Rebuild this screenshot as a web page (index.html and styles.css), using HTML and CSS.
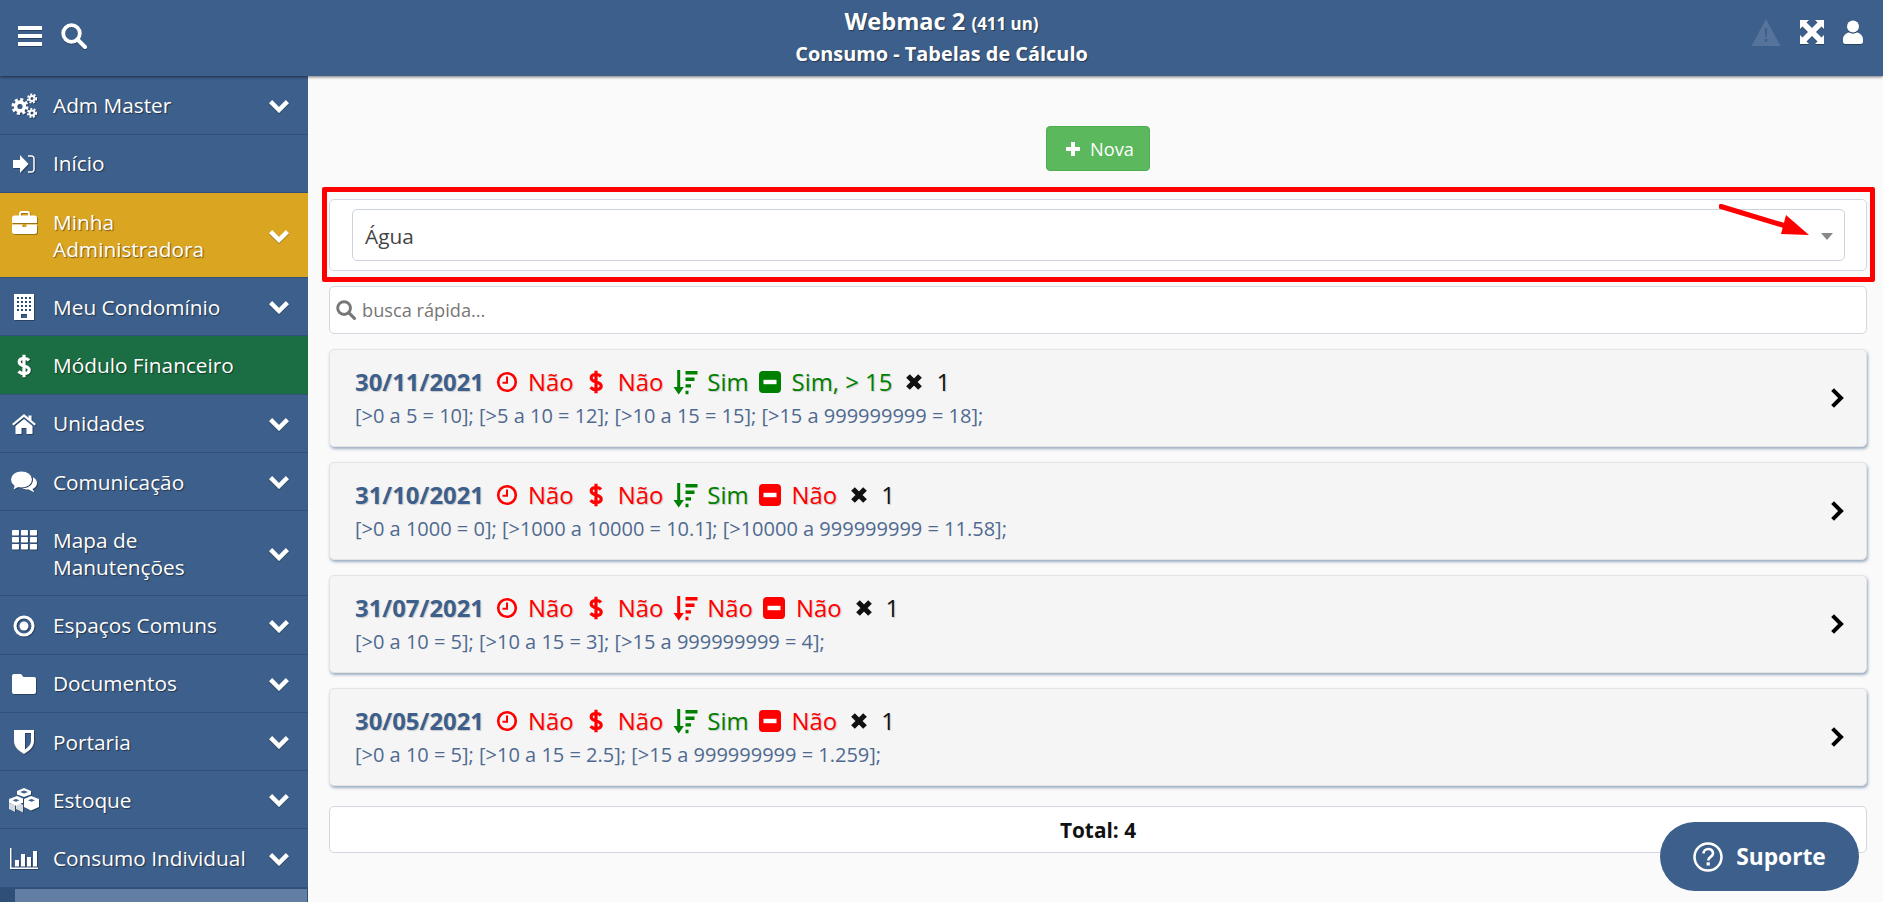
FILE: index.html
```html
<!DOCTYPE html>
<html lang="pt-BR">
<head>
<meta charset="utf-8">
<title>Consumo - Tabelas de Cálculo</title>
<link rel="stylesheet" href="styles.css">
</head>
<body>
<svg class="defs" width="0" height="0" aria-hidden="true">
  <defs>
    <symbol id="i-chev-d" viewBox="0 0 22 14"><path d="M2.6 2.6 11 11l8.4-8.4" fill="none" stroke="currentColor" stroke-width="4.4"/></symbol>
    <symbol id="i-chev-r" viewBox="0 0 14 22"><path d="M2.6 2.6 11 11l-8.4 8.4" fill="none" stroke="currentColor" stroke-width="4"/></symbol>
    <symbol id="i-clock" viewBox="0 0 22 22"><circle cx="11" cy="11" r="8.8" fill="none" stroke="currentColor" stroke-width="2.6"/><path d="M11 5.5v6.2H6.5" fill="none" stroke="currentColor" stroke-width="2"/></symbol>
    <symbol id="i-dollar" viewBox="0 0 14 24"><path d="M12 6.4C10.8 5 9 4.5 7 4.5 4.2 4.500 2.200 5.800 2.200 8c0 5 10 2.900 10 8 0 2.300-2.200 3.500-5 3.500-2.300 0-4.300-.7-5.700-2.200M7 .8v22.400" fill="none" stroke="currentColor" stroke-width="3.200"/></symbol>
    <symbol id="i-sort" viewBox="0 0 25 25"><path d="M4.200 0h3v17h3.700L5.700 24.500.5 17h3.700z" fill="currentColor"/><path d="M12.500 1h12v3.400h-12zM12.500 7.600h9v3.400h-9zM12.500 14.200h5.500v3.400h-5.500zM12.500 20.800h3v3.400h-3z" fill="currentColor"/></symbol>
    <symbol id="i-minus" viewBox="0 0 22 22"><rect width="22" height="22" rx="4" fill="currentColor"/><rect x="4.500" y="8.800" width="13" height="4.400" fill="#fff"/></symbol>
    <symbol id="i-x" viewBox="0 0 18 18"><path d="M3 3l12 12M15 3 3 15" fill="none" stroke="currentColor" stroke-width="5.200"/></symbol>
    <symbol id="i-gears" viewBox="0 0 28 26"><g fill="none" stroke="currentColor"><circle cx="10" cy="13.500" r="4.400" stroke-width="3.600"/><circle cx="10" cy="13.500" r="7" stroke-width="3" stroke-dasharray="3 2.500"/><circle cx="22" cy="5.500" r="2.500" stroke-width="2"/><circle cx="22" cy="5.500" r="4.200" stroke-width="1.800" stroke-dasharray="2 1.500"/><circle cx="22" cy="20" r="2.500" stroke-width="2"/><circle cx="22" cy="20" r="4.200" stroke-width="1.800" stroke-dasharray="2 1.500"/></g></symbol>
    <symbol id="i-login" viewBox="0 0 22 18"><path d="M0 5h7V0l8.500 9L7 18v-5H0z" fill="currentColor"/><path d="M15 1h3.500A2.500 2.500 0 0 1 21 3.500v11a2.500 2.500 0 0 1-2.500 2.500H15" fill="none" stroke="currentColor" stroke-width="1.500"/></symbol>
    <symbol id="i-case" viewBox="0 0 25 23"><path d="M8 5V2.500A1.500 1.500 0 0 1 9.500 1h6A1.500 1.500 0 0 1 17 2.500V5" fill="none" stroke="currentColor" stroke-width="1.800"/><path d="M2.500 4.500h20A2.500 2.500 0 0 1 25 7v5H0V7a2.500 2.500 0 0 1 2.500-2.500zM0 13.500h10.500V16h4v-2.500H25v7a2.500 2.500 0 0 1-2.500 2.500h-20A2.500 2.500 0 0 1 0 20.500z" fill="currentColor"/></symbol>
    <symbol id="i-building" viewBox="0 0 20 26"><path fill-rule="evenodd" fill="currentColor" d="M0 0h20v26H0zM3 3v2h2V3zM7 3v2h2V3zM11 3v2h2V3zM15 3v2h2V3zM3 7v2h2V7zM7 7v2h2V7zM11 7v2h2V7zM15 7v2h2V7zM3 11v2h2v-2zM7 11v2h2v-2zM11 11v2h2v-2zM15 11v2h2v-2zM3 15v2h2v-2zM7 15v2h2v-2zM11 15v2h2v-2zM15 15v2h2v-2zM7 20v4h6v-4z"/></symbol>
    <symbol id="i-home" viewBox="0 0 24 20"><path d="M12 0 16.500 3.800V1.500h3v4.800L24 10l-1.500 1.500L12 3 1.500 11.500 0 10zM12 5l8.500 7v8h-6v-6h-5v6h-6v-8z" fill="currentColor"/></symbol>
    <symbol id="i-chat" viewBox="0 0 26 22"><ellipse cx="10.500" cy="8.500" rx="10.500" ry="8" fill="currentColor"/><path d="M4 14l-1.500 4.500L9 15z" fill="currentColor"/><path d="M22.500 6.500C25 8 26 10 26 12c0 2.700-2 5-4.500 6l2 3.500-6-3c-2.500.2-5-.5-6.500-1.500 6 .5 12-3 11-10.500z" fill="currentColor"/></symbol>
    <symbol id="i-th" viewBox="0 0 25 20"><g fill="currentColor"><rect width="7" height="5.500" rx=".8"/><rect x="9" width="7" height="5.500" rx=".8"/><rect x="18" width="7" height="5.500" rx=".8"/><rect y="7" width="7" height="5.500" rx=".8"/><rect x="9" y="7" width="7" height="5.500" rx=".8"/><rect x="18" y="7" width="7" height="5.500" rx=".8"/><rect y="14" width="7" height="5.500" rx=".8"/><rect x="9" y="14" width="7" height="5.500" rx=".8"/><rect x="18" y="14" width="7" height="5.500" rx=".8"/></g></symbol>
    <symbol id="i-record" viewBox="0 0 22 22"><circle cx="11" cy="11" r="9" fill="none" stroke="currentColor" stroke-width="3"/><circle cx="11" cy="11" r="4.500" fill="currentColor"/></symbol>
    <symbol id="i-folder" viewBox="0 0 24 20"><path d="M2 0h7l2.500 3H22a2 2 0 0 1 2 2v13a2 2 0 0 1-2 2H2a2 2 0 0 1-2-2V2a2 2 0 0 1 2-2z" fill="currentColor"/></symbol>
    <symbol id="i-shield" viewBox="0 0 20 24"><path fill-rule="evenodd" d="M0 0h20v11c0 6-5 10-10 13C5 21 0 17 0 11zM11 3v16.500c3-2 6-5 6-8.500V3z" fill="currentColor"/></symbol>
    <symbol id="i-cubes" viewBox="0 0 30 25"><g fill="currentColor"><path d="M15 0l7 3v3.500L15 9 8 6.500V3z"/><path d="M8 8l6 2.500v4.300l-7 3-7-3V11z"/><path d="M22 8l8 3v8l-8 3.500L15 19v-8z"/><path d="M7 13v8l7 3.500V17zM0 15v6l6 3v-7z" opacity=".8"/></g><path d="M15 2.500 19 4l-4 1.500L11 4zM7 11l3.500 1.300L7 13.800 3.500 12.300zM22.500 11l3.500 1.300-3.500 1.500L19 12.300z" fill="#3d5f8b"/></symbol>
    <symbol id="i-chart" viewBox="0 0 28 22"><path d="M0 0h1.500v19.500H28V21H0z" fill="currentColor"/><path d="M5 12h4v6.500H5zM11 6h4v12.500h-4zM17 9h4v9.500h-4zM23 3h4v15.500h-4z" fill="currentColor"/></symbol>
    <symbol id="i-warning" viewBox="0 0 30 28"><path d="M15 1 29.500 28H.5z" fill="currentColor"/><path d="M13.800 10h2.400l-.4 9h-1.600zM13.700 21h2.600v2.600h-2.600z" fill="#3d5f8b"/></symbol>
    <symbol id="i-full" viewBox="0 0 24 24"><path d="M0 0h9L6.500 2.500 12 8l5.500-5.500L15 0h9v9l-2.500-2.500L16 12l5.500 5.500L24 15v9h-9l2.500-2.500L12 16l-5.500 5.500L9 24H0v-9l2.500 2.500L8 12 2.500 6.500 0 9z" fill="currentColor"/></symbol>
    <symbol id="i-user" viewBox="0 0 20 24"><circle cx="10" cy="6.500" r="6" fill="currentColor"/><path d="M6 12.500c2.500 1.500 5.500 1.500 8 0 3 .5 6 3 6 7v2A2.500 2.500 0 0 1 17.500 24h-15A2.500 2.500 0 0 1 0 21.500v-2c0-4 3-6.500 6-7z" fill="currentColor"/></symbol>
    <symbol id="i-search" viewBox="0 0 26 26"><circle cx="10.500" cy="10.500" r="8.300" fill="none" stroke="currentColor" stroke-width="3.800"/><path d="M16.500 16.500l7.500 7.500" fill="none" stroke="currentColor" stroke-width="4" stroke-linecap="round"/></symbol>
  </defs>
</svg>

<header class="topbar">
  <div class="topbar-left">
    <svg class="icon-bars" viewBox="0 0 24 20"><path d="M0 0h24v4H0zM0 8h24v4H0zM0 16h24v4H0z" fill="currentColor"/></svg>
    <svg class="icon-search"><use href="#i-search"/></svg>
  </div>
  <div class="topbar-title">
    <div class="title-main">Webmac 2 <small class="title-count">(411 un)</small></div>
    <div class="title-sub">Consumo - Tabelas de Cálculo</div>
  </div>
  <div class="topbar-right">
    <svg class="icon-warning"><use href="#i-warning"/></svg>
    <svg class="icon-full"><use href="#i-full"/></svg>
    <svg class="icon-user"><use href="#i-user"/></svg>
  </div>
</header>

<div class="layout">
  <nav class="sidebar">
    <a class="nav-item"><span class="nav-icon"><svg class="ni-gears"><use href="#i-gears"/></svg></span><span class="nav-label">Adm Master</span><svg class="nav-chev"><use href="#i-chev-d"/></svg></a>
    <a class="nav-item"><span class="nav-icon"><svg class="ni-login"><use href="#i-login"/></svg></span><span class="nav-label">Início</span></a>
    <a class="nav-item nav-gold"><span class="nav-icon nav-icon-top"><svg class="ni-case"><use href="#i-case"/></svg></span><span class="nav-label">Minha Administradora</span><svg class="nav-chev"><use href="#i-chev-d"/></svg></a>
    <a class="nav-item"><span class="nav-icon"><svg class="ni-building"><use href="#i-building"/></svg></span><span class="nav-label">Meu Condomínio</span><svg class="nav-chev"><use href="#i-chev-d"/></svg></a>
    <a class="nav-item nav-green"><span class="nav-icon"><svg class="ni-dollar"><use href="#i-dollar"/></svg></span><span class="nav-label">Módulo Financeiro</span></a>
    <a class="nav-item"><span class="nav-icon"><svg class="ni-home"><use href="#i-home"/></svg></span><span class="nav-label">Unidades</span><svg class="nav-chev"><use href="#i-chev-d"/></svg></a>
    <a class="nav-item"><span class="nav-icon"><svg class="ni-chat"><use href="#i-chat"/></svg></span><span class="nav-label">Comunicação</span><svg class="nav-chev"><use href="#i-chev-d"/></svg></a>
    <a class="nav-item"><span class="nav-icon nav-icon-top"><svg class="ni-th"><use href="#i-th"/></svg></span><span class="nav-label">Mapa de Manutenções</span><svg class="nav-chev"><use href="#i-chev-d"/></svg></a>
    <a class="nav-item"><span class="nav-icon"><svg class="ni-record"><use href="#i-record"/></svg></span><span class="nav-label">Espaços Comuns</span><svg class="nav-chev"><use href="#i-chev-d"/></svg></a>
    <a class="nav-item"><span class="nav-icon"><svg class="ni-folder"><use href="#i-folder"/></svg></span><span class="nav-label">Documentos</span><svg class="nav-chev"><use href="#i-chev-d"/></svg></a>
    <a class="nav-item"><span class="nav-icon"><svg class="ni-shield"><use href="#i-shield"/></svg></span><span class="nav-label">Portaria</span><svg class="nav-chev"><use href="#i-chev-d"/></svg></a>
    <a class="nav-item"><span class="nav-icon"><svg class="ni-cubes"><use href="#i-cubes"/></svg></span><span class="nav-label">Estoque</span><svg class="nav-chev"><use href="#i-chev-d"/></svg></a>
    <a class="nav-item"><span class="nav-icon"><svg class="ni-chart"><use href="#i-chart"/></svg></span><span class="nav-label">Consumo Individual</span><svg class="nav-chev"><use href="#i-chev-d"/></svg></a>
    <div class="nav-sub"><span class="nav-sub-mark"></span><span class="nav-sub-fill"></span></div>
  </nav>

  <main class="content">
    <div class="actions">
      <button class="btn-new" type="button"><svg class="btn-plus" viewBox="0 0 14 14"><path d="M5 0h4v5h5v4H9v5H5V9H0V5h5z" fill="currentColor"/></svg>Nova</button>
    </div>

    <section class="select-panel">
      <div class="select-box"><span>Água</span><span class="select-caret"></span></div>
    </section>

    <div class="search-box">
      <svg class="search-icon"><use href="#i-search"/></svg>
      <span class="search-ph">busca rápida...</span>
    </div>

    <div class="cards">
      <article class="card">
        <div class="card-body">
          <div class="card-title">
            <strong class="card-date">30/11/2021</strong>
            <span class="flag no"><svg class="f-clock"><use href="#i-clock"/></svg>Não</span>
            <span class="flag no"><svg class="f-dollar"><use href="#i-dollar"/></svg>Não</span>
            <span class="flag yes"><svg class="f-sort"><use href="#i-sort"/></svg>Sim</span>
            <span class="flag yes"><svg class="f-minus"><use href="#i-minus"/></svg>Sim, &gt; 15</span>
            <span class="flag qty"><svg class="f-x"><use href="#i-x"/></svg>1</span>
          </div>
          <div class="card-sub">[&gt;0 a 5 = 10]; [&gt;5 a 10 = 12]; [&gt;10 a 15 = 15]; [&gt;15 a 999999999 = 18];</div>
        </div>
        <svg class="card-chev"><use href="#i-chev-r"/></svg>
      </article>

      <article class="card">
        <div class="card-body">
          <div class="card-title">
            <strong class="card-date">31/10/2021</strong>
            <span class="flag no"><svg class="f-clock"><use href="#i-clock"/></svg>Não</span>
            <span class="flag no"><svg class="f-dollar"><use href="#i-dollar"/></svg>Não</span>
            <span class="flag yes"><svg class="f-sort"><use href="#i-sort"/></svg>Sim</span>
            <span class="flag no"><svg class="f-minus"><use href="#i-minus"/></svg>Não</span>
            <span class="flag qty"><svg class="f-x"><use href="#i-x"/></svg>1</span>
          </div>
          <div class="card-sub">[&gt;0 a 1000 = 0]; [&gt;1000 a 10000 = 10.1]; [&gt;10000 a 999999999 = 11.58];</div>
        </div>
        <svg class="card-chev"><use href="#i-chev-r"/></svg>
      </article>

      <article class="card">
        <div class="card-body">
          <div class="card-title">
            <strong class="card-date">31/07/2021</strong>
            <span class="flag no"><svg class="f-clock"><use href="#i-clock"/></svg>Não</span>
            <span class="flag no"><svg class="f-dollar"><use href="#i-dollar"/></svg>Não</span>
            <span class="flag no"><svg class="f-sort"><use href="#i-sort"/></svg>Não</span>
            <span class="flag no"><svg class="f-minus"><use href="#i-minus"/></svg>Não</span>
            <span class="flag qty"><svg class="f-x"><use href="#i-x"/></svg>1</span>
          </div>
          <div class="card-sub">[&gt;0 a 10 = 5]; [&gt;10 a 15 = 3]; [&gt;15 a 999999999 = 4];</div>
        </div>
        <svg class="card-chev"><use href="#i-chev-r"/></svg>
      </article>

      <article class="card">
        <div class="card-body">
          <div class="card-title">
            <strong class="card-date">30/05/2021</strong>
            <span class="flag no"><svg class="f-clock"><use href="#i-clock"/></svg>Não</span>
            <span class="flag no"><svg class="f-dollar"><use href="#i-dollar"/></svg>Não</span>
            <span class="flag yes"><svg class="f-sort"><use href="#i-sort"/></svg>Sim</span>
            <span class="flag no"><svg class="f-minus"><use href="#i-minus"/></svg>Não</span>
            <span class="flag qty"><svg class="f-x"><use href="#i-x"/></svg>1</span>
          </div>
          <div class="card-sub">[&gt;0 a 10 = 5]; [&gt;10 a 15 = 2.5]; [&gt;15 a 999999999 = 1.259];</div>
        </div>
        <svg class="card-chev"><use href="#i-chev-r"/></svg>
      </article>
    </div>

    <div class="total">Total: 4</div>
  </main>
</div>

<div class="annot-box"></div>
<svg class="annot-arrow" viewBox="0 0 92 32"><path d="M2 2.500 70 23" fill="none" stroke="#f00" stroke-width="5" stroke-linecap="round"/><path d="M67 11 90 31 62 30z" fill="#f00"/></svg>

<a class="support">
  <svg class="support-icon" viewBox="0 0 30 30"><circle cx="15" cy="15" r="13.500" fill="none" stroke="currentColor" stroke-width="2.500"/><path d="M10.500 11.500c0-6 9.500-6 9.500-.3 0 3.800-4.700 3.600-4.700 7.300" fill="none" stroke="currentColor" stroke-width="2.600"/><rect x="13.600" y="20.300" width="3.200" height="3.200" fill="currentColor"/></svg>
  <span>Suporte</span>
</a>
</body>
</html>
```

FILE: styles.css
```css
* { box-sizing: border-box; }

html, body {
  margin: 0;
  height: 100%;
  overflow: hidden;
}

body {
  display: flex;
  flex-direction: column;
  background: #fafafa;
  font-family: "Open Sans", "Noto Sans", sans-serif;
  color: #333;
}

.defs { position: absolute; }

.topbar {
  position: relative;
  z-index: 2;
  flex: 0 0 76px;
  display: flex;
  align-items: flex-start;
  justify-content: space-between;
  background: #3d5f8b;
  color: #fff;
  box-shadow: 0 1px 3px rgba(0, 0, 0, .55);
}

.topbar-left {
  display: flex;
  align-items: center;
  gap: 19px;
  padding: 23px 0 0 18px;
  width: 300px;
}

.icon-bars { width: 24px; height: 20px; filter: drop-shadow(0 1px 0 rgba(0,0,0,.3)); }
.icon-search { width: 26px; height: 26px; filter: drop-shadow(0 1px 0 rgba(0,0,0,.3)); }

.topbar-title {
  flex: 1;
  text-align: center;
  font-weight: 700;
  text-shadow: 1px 1px 1px rgba(0, 0, 0, .4);
}

.title-main { font-size: 23.6px; line-height: 30px; padding-top: 6px; }
.title-count { font-size: 16.9px; }
.title-sub { font-size: 19.9px; line-height: 24px; padding-top: 3px; }

.topbar-right {
  display: flex;
  justify-content: flex-end;
  align-items: center;
  width: 300px;
  padding: 18px 20px 0 0;
}

.icon-warning { width: 30px; height: 28px; color: #56739b; margin-right: 19px; }
.icon-full { width: 24px; height: 24px; margin-right: 19px; filter: drop-shadow(0 1px 0 rgba(0,0,0,.3)); }
.icon-user { width: 20px; height: 24px; filter: drop-shadow(0 1px 0 rgba(0,0,0,.3)); }

.layout {
  flex: 1;
  display: flex;
  min-height: 0;
}

.sidebar {
  flex: 0 0 308px;
  background: #3d5f8b;
  overflow: hidden;
  padding-top: .5px;
}

.nav-item {
  display: flex;
  align-items: center;
  padding: 15.6px 18px 14.6px 0;
  border-bottom: 1px solid #33507a;
  color: #fff;
  font-size: 20.8px;
  line-height: 27.04px;
  text-shadow: 1px 1px 1px rgba(0, 0, 0, .45);
}

.nav-gold { background: #daa520; }
.nav-green { background: #1b6e43; }

.nav-icon {
  flex: 0 0 53px;
  display: flex;
  justify-content: center;
  padding-right: 5px;
  height: 27px;
  align-items: center;
}

.nav-icon-top { align-self: flex-start; }

.nav-icon svg { filter: drop-shadow(1px 1px 0 rgba(0, 0, 0, .3)); }

.nav-label {
  flex: 1;
  max-width: 200px;
  margin-right: auto;
}

.nav-chev {
  flex: 0 0 22px;
  width: 22px;
  height: 14px;
  filter: drop-shadow(0 1px 0 rgba(0, 0, 0, .3));
}

.ni-gears { width: 28px; height: 26px; }
.ni-login { width: 22px; height: 18px; }
.ni-case { width: 25px; height: 23px; }
.ni-building { width: 20px; height: 26px; }
.ni-dollar { width: 14px; height: 24px; }
.ni-home { width: 24px; height: 20px; }
.ni-chat { width: 26px; height: 22px; }
.ni-th { width: 25px; height: 20px; }
.ni-record { width: 22px; height: 22px; }
.ni-folder { width: 24px; height: 20px; }
.ni-shield { width: 20px; height: 24px; }
.ni-cubes { width: 30px; height: 25px; }
.ni-chart { width: 28px; height: 22px; }

.nav-sub {
  display: flex;
  height: 20px;
  background: #2f4e78;
}

.nav-sub-mark { flex: 0 0 15px; }
.nav-sub-fill { flex: 1; margin: 1px 1px 0 0; background: #637da3; }

.content {
  flex: 1;
  min-width: 0;
  padding: 50px 16px 0 21px;
}

.actions {
  display: flex;
  justify-content: center;
  margin-bottom: 28px;
}

.btn-new {
  display: flex;
  align-items: center;
  justify-content: center;
  gap: 10px;
  width: 104px;
  height: 45px;
  padding: 0 0 0 4px;
  border: 1px solid #4cae4c;
  border-radius: 4px;
  background: #5cb85c;
  color: #fff;
  font: 400 18.2px "Open Sans", sans-serif;
}

.btn-plus { width: 14px; height: 14px; }

.select-panel {
  height: 72px;
  padding: 9px 21px 9px 22px;
  margin-bottom: 15px;
  background: #fff;
  border: 1px solid #d3d8e0;
  border-radius: 5px;
}

.select-box {
  display: flex;
  align-items: center;
  justify-content: space-between;
  height: 52px;
  padding: 2px 11px 0 12px;
  background: #fff;
  border: 1px solid #cdd3dc;
  border-radius: 5px;
  font-size: 20.8px;
  color: #444;
}

.select-caret {
  width: 0;
  height: 0;
  border-left: 6.5px solid transparent;
  border-right: 6.5px solid transparent;
  border-top: 7.5px solid #888;
}

.search-box {
  display: flex;
  align-items: center;
  gap: 6px;
  height: 48px;
  padding: 0 6px;
  margin-bottom: 15px;
  background: #fff;
  border: 1px solid #d3d8e0;
  border-radius: 5px;
}

.search-icon { width: 20px; height: 20px; color: #777; flex: none; }
.search-ph { font-size: 18.2px; color: #777; }

.cards {
  display: flex;
  flex-direction: column;
  gap: 15px;
}

.card {
  display: flex;
  align-items: center;
  justify-content: space-between;
  height: 98px;
  padding: 0 22px 0 25px;
  background: #f5f5f5;
  border: 1px solid #e4e4e4;
  border-radius: 5px;
  box-shadow: 1px 2px 3px rgba(61, 95, 139, .5);
}

.card-title {
  display: flex;
  align-items: center;
  font-size: 23.9px;
  line-height: 30px;
  text-shadow: 1px 1px 1px rgba(0, 0, 0, .18);
}

.card-date { color: #3d5f8b; font-weight: 700; margin-right: 12px; }

.flag { display: flex; align-items: center; margin-right: 10px; white-space: pre; }
.no { color: #f00; }
.yes { color: #008000; }
.qty { color: #111; }

.flag svg { flex: none; }
.f-clock { width: 22px; height: 22px; margin-right: 10px; }
.f-dollar { width: 14px; height: 24px; margin: 0 15px 0 5px; }
.f-sort { width: 25px; height: 25px; margin-right: 9px; }
.f-minus { width: 22px; height: 22px; margin-right: 11px; }
.f-x { width: 18px; height: 18px; margin: 0 13px 0 3px; }

.card-sub {
  font-size: 20px;
  line-height: 26px;
  margin-top: 6px;
  color: #4f6a90;
}

.card-chev { width: 14px; height: 22px; color: #000; flex: none; }

.total {
  display: flex;
  align-items: center;
  justify-content: center;
  height: 47px;
  margin-top: 20px;
  background: #fff;
  border: 1px solid #d3d8e0;
  border-radius: 5px;
  font-size: 20.8px;
  font-weight: 700;
  color: #111;
}

.annot-box {
  position: absolute;
  left: 322px;
  top: 187px;
  width: 1553px;
  height: 95px;
  border: 5px solid #f00;
  border-radius: 2px;
}

.annot-arrow {
  position: absolute;
  left: 1719px;
  top: 204px;
  width: 92px;
  height: 32px;
}

.support {
  position: absolute;
  left: 1660px;
  top: 822px;
  width: 199px;
  height: 69px;
  display: flex;
  align-items: center;
  justify-content: center;
  gap: 13px;
  background: #3d5f8b;
  border-radius: 35px;
  color: #fff;
  font-size: 22.75px;
  font-weight: 700;
}

.support-icon { width: 30px; height: 30px; }
```
